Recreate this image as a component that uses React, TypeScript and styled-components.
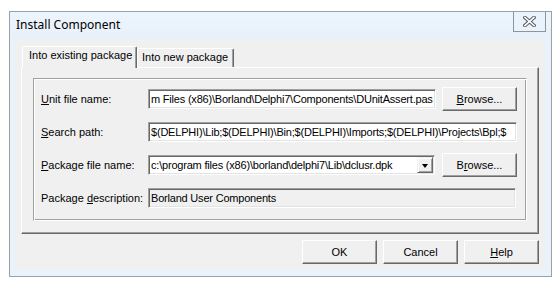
import styled, { createGlobalStyle } from "styled-components";

const GlobalStyle = createGlobalStyle`
  * { box-sizing: border-box; }
  body {
    margin: 0;
    background: #ffffff;
    font-family: "Liberation Sans", Arial, sans-serif;
    font-size: 11px;
    color: #000;
  }
`;

const Page = styled.div`
  width: 560px;
  height: 289px;
  padding: 11px 0 0 9px;
  background: #ffffff;
`;

const Window = styled.div`
  width: 543px;
  height: 266px;
  border: 1px solid #9ca1a7;
  background: #eaf2fb;
  display: flex;
  flex-direction: column;
`;

const TitleBar = styled.div`
  height: 27px;
  flex: 0 0 auto;
  display: flex;
  align-items: flex-start;
  justify-content: space-between;
  padding: 0 5px 0 6px;
  background: linear-gradient(#ecf4fc, #e8f1fb);
`;

const Title = styled.span`
  font: 12px/16px "Noto Sans", "Liberation Sans", sans-serif;
  margin-top: 5px;
  color: #000;
`;

const CloseButton = styled.div`
  width: 33px;
  height: 21px;
  margin-top: -1px;
  border: 1px solid #8f949a;
  border-top-color: #9ca1a7;
  background: #eaf2fb;
  display: flex;
  align-items: center;
  justify-content: center;
`;

const Client = styled.div`
  flex: 1;
  margin: 0 6px 7px 5px;
  background: #f0f0f0;
  display: flex;
  flex-direction: column;
  padding: 7px 6px 5px 6px;
`;

const TabStrip = styled.div`
  height: 21px;
  flex: 0 0 auto;
  display: flex;
  align-items: flex-end;
  padding-left: 1px;
  position: relative;
  z-index: 1;
`;

const Tab = styled.div<{ $active?: boolean }>`
  width: ${({ $active }) => ($active ? "115px" : "97px")};
  height: ${({ $active }) => ($active ? "22px" : "19px")};
  margin-bottom: ${({ $active }) => ($active ? "-1px" : "0")};
  padding: ${({ $active }) => ($active ? "2px 0 0 6px" : "2px 0 0 4px")};
  border-top: 1px solid #ffffff;
  border-left: 1px solid #ffffff;
  border-right: 1px solid #696969;
  box-shadow: inset -1px 0 0 #a0a0a0;
  border-radius: 2px 2px 0 0;
  background: #f0f0f0;
  line-height: 13px;
  white-space: nowrap;
`;

const Panel = styled.div`
  height: 167px;
  flex: 0 0 auto;
  border-top: 1px solid #ffffff;
  border-left: 1px solid #ffffff;
  border-right: 1px solid #696969;
  border-bottom: 1px solid #696969;
  box-shadow: inset -1px -1px 0 #a0a0a0;
  padding: 10px 11px 12px 11px;
`;

const Group = styled.div`
  height: 143px;
  border-top: 1px solid #a0a0a0;
  border-left: 1px solid #a0a0a0;
  border-right: 1px solid #ffffff;
  border-bottom: 1px solid #ffffff;
  box-shadow: inset 1px 1px 0 #ffffff, inset -1px -1px 0 #a0a0a0;
  padding: 8px 9px 0 7px;
  display: flex;
  flex-direction: column;
  gap: 9px;
`;

const Row = styled.div`
  height: 24px;
  display: flex;
  align-items: center;
`;

const Label = styled.span`
  width: 107px;
  flex: 0 0 auto;
  white-space: nowrap;
  line-height: 13px;
`;

const Field = styled.div<{ $width: number; $disabled?: boolean }>`
  width: ${({ $width }) => $width}px;
  height: 20px;
  flex: 0 0 auto;
  border-top: 1px solid #a0a0a0;
  border-left: 1px solid #a0a0a0;
  border-right: 1px solid #ffffff;
  border-bottom: 1px solid #ffffff;
  box-shadow: inset 1px 1px 0 #696969, inset -1px -1px 0 #e3e3e3;
  background: ${({ $disabled }) => ($disabled ? "#f0f0f0" : "#ffffff")};
  display: flex;
  align-items: center;
  padding: 1px 1px 0 2px;
  overflow: hidden;
`;

const FieldText = styled.span`
  flex: 1;
  white-space: nowrap;
  overflow: hidden;
  line-height: 13px;
  letter-spacing: -0.2px;
`;

const DropButton = styled.div`
  width: 16px;
  height: 16px;
  flex: 0 0 auto;
  margin: -1px 0 0 2px;
  border-top: 1px solid #f0f0f0;
  border-left: 1px solid #f0f0f0;
  border-right: 1px solid #696969;
  border-bottom: 1px solid #696969;
  box-shadow: inset 1px 1px 0 #ffffff, inset -1px -1px 0 #a0a0a0;
  background: #f0f0f0;
  display: flex;
  align-items: center;
  justify-content: center;
`;

const Arrow = styled.span`
  width: 0;
  height: 0;
  border-left: 3.5px solid transparent;
  border-right: 3.5px solid transparent;
  border-top: 4px solid #000;
  margin-top: 1px;
`;

const Button = styled.div<{ $gap?: number }>`
  width: 75px;
  height: 24px;
  flex: 0 0 auto;
  margin-left: ${({ $gap }) => $gap ?? 0}px;
  border-top: 1px solid #ffffff;
  border-left: 1px solid #ffffff;
  border-right: 1px solid #696969;
  border-bottom: 1px solid #696969;
  box-shadow: inset -1px -1px 0 #a0a0a0;
  background: #f0f0f0;
  display: flex;
  align-items: center;
  justify-content: center;
  line-height: 13px;
`;

const ButtonRow = styled.div`
  margin-top: 6px;
  display: flex;
  justify-content: flex-end;
  gap: 6px;
`;

const CloseGlyph = () => (
  <svg width="13" height="11" viewBox="0 0 13 11">
    <path d="M2 1.5 L11 9.5 M11 1.5 L2 9.5" stroke="#5a5e64" strokeWidth="3.6" strokeLinecap="square" />
    <path d="M2 1.5 L11 9.5 M11 1.5 L2 9.5" stroke="#ffffff" strokeWidth="1.6" strokeLinecap="square" />
  </svg>
);

export default function App() {
  return (
    <Page>
      <GlobalStyle />
      <Window>
        <TitleBar>
          <Title>Install Component</Title>
          <CloseButton>
            <CloseGlyph />
          </CloseButton>
        </TitleBar>
        <Client>
          <TabStrip>
            <Tab $active>Into existing package</Tab>
            <Tab>Into new package</Tab>
          </TabStrip>
          <Panel>
            <Group>
              <Row>
                <Label>
                  <u>U</u>nit file name:
                </Label>
                <Field $width={288}>
                  <FieldText>m Files (x86)\Borland\Delphi7\Components\DUnitAssert.pas</FieldText>
                </Field>
                <Button $gap={6}>
                  <span>
                    <u>B</u>rowse...
                  </span>
                </Button>
              </Row>
              <Row>
                <Label>
                  <u>S</u>earch path:
                </Label>
                <Field $width={369}>
                  <FieldText>$(DELPHI)\Lib;$(DELPHI)\Bin;$(DELPHI)\Imports;$(DELPHI)\Projects\Bpl;$</FieldText>
                </Field>
              </Row>
              <Row>
                <Label>
                  <u>P</u>ackage file name:
                </Label>
                <Field $width={287}>
                  <FieldText>c:\program files (x86)\borland\delphi7\Lib\dclusr.dpk</FieldText>
                  <DropButton>
                    <Arrow />
                  </DropButton>
                </Field>
                <Button $gap={7}>
                  <span>
                    B<u>r</u>owse...
                  </span>
                </Button>
              </Row>
              <Row>
                <Label>
                  Package <u>d</u>escription:
                </Label>
                <Field $width={368} $disabled>
                  <FieldText>Borland User Components</FieldText>
                </Field>
              </Row>
            </Group>
          </Panel>
          <ButtonRow>
            <Button>OK</Button>
            <Button>Cancel</Button>
            <Button>
              <span>
                <u>H</u>elp
              </span>
            </Button>
          </ButtonRow>
        </Client>
      </Window>
    </Page>
  );
}
